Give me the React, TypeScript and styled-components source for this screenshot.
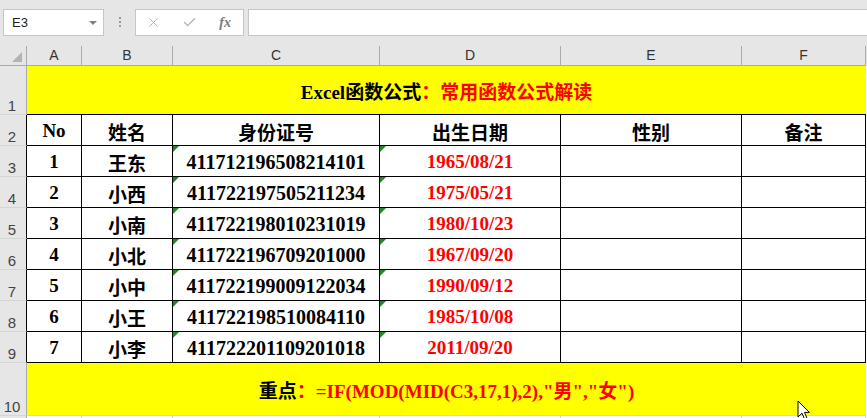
import React from "react";
import styled, { createGlobalStyle } from "styled-components";
import { X, Check } from "lucide-react";

const GlobalStyle = createGlobalStyle`
  html, body {
    margin: 0;
    padding: 0;
    background: #e6e6e6;
    overflow: hidden;
  }
  body {
    font-family: "Liberation Sans", Arial, sans-serif;
  }
  * {
    box-sizing: border-box;
  }
`;

const COLS = "27px 55px 91px 207px 181px 181px 124px 1fr";
const SERIF = `"Liberation Serif", "Noto Sans CJK SC", serif`;

const Page = styled.div`
  position: relative;
  width: 867px;
  height: 418px;
  overflow: hidden;
`;

const FormulaBar = styled.div`
  display: flex;
  align-items: flex-start;
  height: 46px;
  padding: 9px 0 0 3px;
`;

const NameBox = styled.div`
  display: flex;
  align-items: center;
  justify-content: space-between;
  width: 101px;
  height: 27px;
  padding: 0 6px 0 8px;
  border: 1px solid #c6c6c6;
  background: #fff;
  font-size: 13px;
  color: #222;
`;

const DropArrow = styled.span`
  width: 0;
  height: 0;
  border-left: 4px solid transparent;
  border-right: 4px solid transparent;
  border-top: 4px solid #808080;
`;

const Dots = styled.div`
  display: flex;
  flex-direction: column;
  gap: 2px;
  margin: 8px 0 0 15px;
  span {
    width: 2px;
    height: 2px;
    background: #9a9a9a;
  }
`;

const FuncBox = styled.div`
  display: flex;
  align-items: center;
  width: 109px;
  height: 27px;
  margin-left: 14px;
  border: 1px solid #c6c6c6;
  background: #fff;
`;

const FuncSlot = styled.div`
  display: flex;
  align-items: center;
  justify-content: center;
  width: 36px;
  color: #b4b4b4;
`;

const Fx = styled.span`
  font-family: "Liberation Serif", serif;
  font-style: italic;
  font-weight: bold;
  font-size: 14px;
  color: #7a7a7a;
`;

const FormulaInput = styled.div`
  flex: 1;
  height: 27px;
  margin-left: 4px;
  border: 1px solid #c6c6c6;
  border-right: none;
  background: #fff;
`;

const Row = styled.div<{ $h: number }>`
  display: grid;
  grid-template-columns: ${COLS};
  height: ${(p) => p.$h}px;
`;

const Corner = styled.div`
  position: relative;
  border-right: 1px solid #ababab;
  border-bottom: 1px solid #ababab;
  &::after {
    content: "";
    position: absolute;
    right: 4px;
    bottom: 3px;
    border-left: 10px solid transparent;
    border-bottom: 10px solid #b4b4b4;
  }
`;

const ColHead = styled.div`
  display: flex;
  align-items: flex-end;
  justify-content: center;
  padding-bottom: 2px;
  border-right: 1px solid #ababab;
  border-bottom: 1px solid #ababab;
  font-size: 14px;
  color: #333;
`;

const RowHead = styled.div<{ $dark?: boolean }>`
  display: flex;
  align-items: flex-end;
  justify-content: center;
  padding: 0 2px 0 0;
  background: #e6e6e6;
  border-right: 1px solid ${(p) => (p.$dark ? "#000" : "#ababab")};
  border-bottom: 1px solid #d5d5d5;
  font-size: 15px;
  line-height: 17px;
  color: #444;
`;

const Banner = styled.div<{ $line: string }>`
  grid-column: 2 / 8;
  display: flex;
  align-items: center;
  justify-content: center;
  background: #ffff00;
  border-bottom: 1px solid ${(p) => p.$line};
  font-family: ${SERIF};
  font-weight: bold;
  font-size: 19px;
  color: #000;
`;

const Red = styled.span`
  color: #ff0000;
`;

const Cell = styled.div<{ $red?: boolean; $flag?: boolean }>`
  position: relative;
  display: flex;
  align-items: center;
  justify-content: center;
  padding-top: 2px;
  background: #fff;
  border-right: 1px solid #000;
  border-bottom: 1px solid #000;
  font-family: ${SERIF};
  font-weight: bold;
  font-size: 19px;
  color: ${(p) => (p.$red ? "#ff0000" : "#000")};
  white-space: nowrap;
  &::before {
    content: ${(p) => (p.$flag ? '""' : "none")};
    position: absolute;
    top: 0;
    left: 0;
    border-top: 6px solid #1f8a1f;
    border-right: 6px solid transparent;
  }
`;

const IdText = styled.span`
  font-size: 20px;
`;

const Filler = styled.div<{ $bg?: string }>`
  background: ${(p) => p.$bg ?? "#fff"};
`;

const GridCell = styled.div`
  background: #fff;
  border-right: 1px solid #d4d4d4;
  border-bottom: 1px solid #d4d4d4;
`;

const Pointer = styled.svg`
  position: absolute;
  left: 797px;
  top: 400px;
`;

const people = [
  ["1", "王东", "411712196508214101", "1965/08/21"],
  ["2", "小西", "411722197505211234", "1975/05/21"],
  ["3", "小南", "411722198010231019", "1980/10/23"],
  ["4", "小北", "411722196709201000", "1967/09/20"],
  ["5", "小中", "411722199009122034", "1990/09/12"],
  ["6", "小王", "411722198510084110", "1985/10/08"],
  ["7", "小李", "411722201109201018", "2011/09/20"],
];

const headers = ["No", "姓名", "身份证号", "出生日期", "性别", "备注"];

export default function App() {
  return (
    <Page>
      <GlobalStyle />
      <FormulaBar>
        <NameBox>
          E3
          <DropArrow />
        </NameBox>
        <Dots>
          <span />
          <span />
          <span />
        </Dots>
        <FuncBox>
          <FuncSlot>
            <X size={15} strokeWidth={1.6} />
          </FuncSlot>
          <FuncSlot>
            <Check size={15} strokeWidth={2.2} />
          </FuncSlot>
          <FuncSlot>
            <Fx>fx</Fx>
          </FuncSlot>
        </FuncBox>
        <FormulaInput />
      </FormulaBar>

      <Row $h={20}>
        <Corner />
        {["A", "B", "C", "D", "E", "F"].map((c) => (
          <ColHead key={c}>{c}</ColHead>
        ))}
        <Filler $bg="#e6e6e6" />
      </Row>

      <Row $h={49}>
        <RowHead>1</RowHead>
        <Banner $line="#000">
          Excel函数公式<Red>：常用函数公式解读</Red>
        </Banner>
        <Filler />
      </Row>

      <Row $h={31}>
        <RowHead $dark>2</RowHead>
        {headers.map((h) => (
          <Cell key={h}>{h}</Cell>
        ))}
        <Filler />
      </Row>

      {people.map(([no, name, id, birth], i) => (
        <Row $h={31} key={no}>
          <RowHead $dark>{i + 3}</RowHead>
          <Cell>{no}</Cell>
          <Cell>{name}</Cell>
          <Cell $flag>
            <IdText>{id}</IdText>
          </Cell>
          <Cell $flag $red>
            {birth}
          </Cell>
          <Cell />
          <Cell />
          <Filler />
        </Row>
      ))}

      <Row $h={53}>
        <RowHead>10</RowHead>
        <Banner $line="#d4d4d4">
          重点<Red>：=IF(MOD(MID(C3,17,1),2),"男","女")</Red>
        </Banner>
        <Filler />
      </Row>

      {/* row 11 only peeks in at the bottom edge, its number is out of view */}
      <Row $h={30}>
        <RowHead />
        <GridCell />
        <GridCell />
        <GridCell />
        <GridCell />
        <GridCell />
        <GridCell />
        <Filler />
      </Row>

      <Pointer width="14" height="22" viewBox="0 0 14 22">
        <path
          d="M1 1 L1 17 L5 13.2 L7.8 19.6 L10.2 18.6 L7.5 12.4 L12.4 12.4 Z"
          fill="#fff"
          stroke="#000"
          strokeWidth="1"
          strokeLinejoin="round"
        />
      </Pointer>
    </Page>
  );
}
